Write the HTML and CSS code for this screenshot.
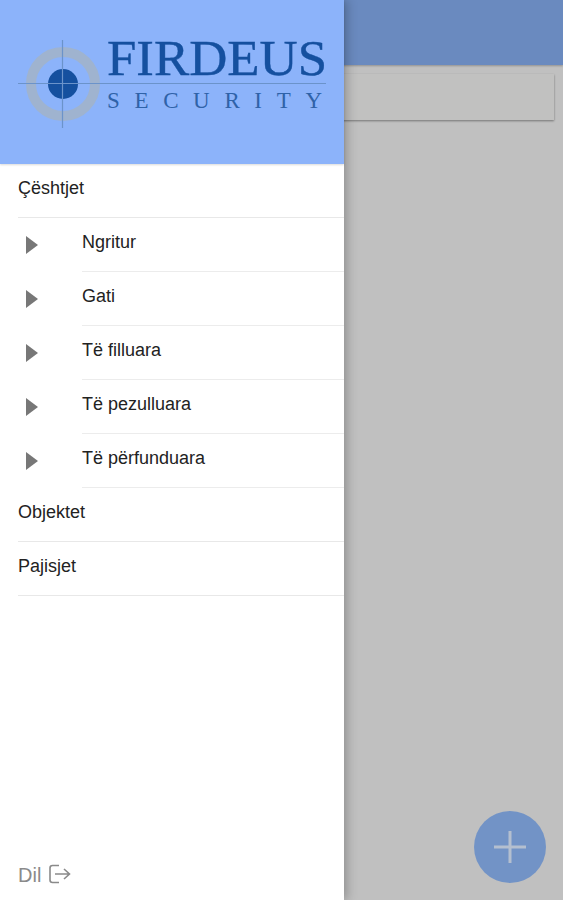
FILE: index.html
```html
<!DOCTYPE html>
<html lang="en">
<head>
    <meta charset="UTF-8">
    <meta name="viewport" content="width=device-width, initial-scale=1.0">
    <title>Firdeus Security</title>
    <link rel="stylesheet" href="styles.css">
</head>
<body>

    <!-- Page behind the drawer -->
    <div class="page">
        <div class="app-bar"></div>
        <div class="search-card"></div>
        <div class="fab">
            <svg width="34" height="34" viewBox="0 0 34 34">
                <path d="M17 1V33M1 17H33" stroke="#b4bfcf" stroke-width="3" fill="none"/>
            </svg>
        </div>
    </div>

    <!-- Side drawer -->
    <nav class="drawer">
        <div class="drawer-header">
            <svg class="logo" width="344" height="164" viewBox="0 0 344 164">
                <circle cx="63" cy="84" r="32" fill="none" stroke="#9fb3cf" stroke-width="10"/>
                <circle cx="63" cy="84" r="15" fill="#15509f"/>
                <path d="M18 83.5H326M62.5 40V128" stroke="#6b93ca" stroke-width="1.2" fill="none"/>
                <text class="logo-name" x="107" y="75" textLength="220" lengthAdjust="spacingAndGlyphs">FIRDEUS</text>
                <text class="logo-sub" x="107" y="108" textLength="215">SECURITY</text>
            </svg>
        </div>

        <div class="menu">
            <div class="menu-item">Çështjet</div>

            <div class="sub-item">
                <span class="arrow"></span>
                <div class="sub-label">Ngritur</div>
            </div>
            <div class="sub-item">
                <span class="arrow"></span>
                <div class="sub-label">Gati</div>
            </div>
            <div class="sub-item">
                <span class="arrow"></span>
                <div class="sub-label">Të filluara</div>
            </div>
            <div class="sub-item">
                <span class="arrow"></span>
                <div class="sub-label">Të pezulluara</div>
            </div>
            <div class="sub-item">
                <span class="arrow"></span>
                <div class="sub-label">Të përfunduara</div>
            </div>

            <div class="menu-item">Objektet</div>
            <div class="menu-item">Pajisjet</div>
        </div>

        <div class="logout">
            <span>Dil</span>
            <svg class="logout-icon" width="24" height="22" viewBox="0 0 24 22">
                <path d="M11 1.500H4.500Q2 1.500 2 4V16Q2 18.500 4.500 18.500H11" stroke="#8a8a8a" stroke-width="1.600" fill="none"/>
                <path d="M7 10H21M16 5L21.500 10L16 15" stroke="#8a8a8a" stroke-width="1.600" fill="none"/>
            </svg>
        </div>
    </nav>

</body>
</html>
```

FILE: styles.css
```css
html, body {
    height: 100%;
}
body {
    margin: 0;
    height: 900px;
    overflow: hidden;
    position: relative;
    background: #c0c0c0;
    font-family: "Liberation Sans", Arial, sans-serif;
}
.page {
    height: 900px;
    display: flex;
    flex-direction: column;
}
.app-bar {
    height: 65px;
    flex-shrink: 0;
    background: #6a8abf;
    box-shadow: 0 1px 2px rgba(0, 0, 0, 0.25);
}
.search-card {
    height: 46px;
    margin: 9px 9px 0 9px;
    background: #c1c1c0;
    box-shadow: 0 1px 2px rgba(0, 0, 0, 0.4);
}
.fab {
    position: absolute;
    left: 474px;
    top: 811px;
    width: 72px;
    height: 72px;
    border-radius: 50%;
    background: #7293c6;
    display: flex;
    align-items: center;
    justify-content: center;
}
.drawer {
    position: absolute;
    left: 0;
    top: 0;
    width: 344px;
    height: 900px;
    background: #fff;
    display: flex;
    flex-direction: column;
    box-shadow: 3px 0 10px rgba(0, 0, 0, 0.25);
}
.drawer-header {
    height: 164px;
    flex-shrink: 0;
    background: #8cb3fa;
    box-shadow: 0 1px 2px rgba(0, 0, 0, 0.15);
}
.logo {
    display: block;
}
.logo-name {
    font-family: "Liberation Serif", "Times New Roman", serif;
    font-size: 50px;
    fill: #15509f;
    stroke: #15509f;
    stroke-width: 0.4px;
}
.logo-sub {
    font-family: "Liberation Serif", "Times New Roman", serif;
    font-size: 23px;
    fill: #2f62a8;
}
.menu {
    flex: 1;
    font-size: 18px;
    color: #222;
}
.menu-item {
    height: 53px;
    line-height: 48px;
    margin-left: 18px;
    border-bottom: 1px solid #e8e8e8;
}
.sub-item {
    height: 54px;
    display: flex;
}
.arrow {
    width: 0;
    height: 0;
    margin: 18px 0 0 26px;
    border-left: 12px solid #777;
    border-top: 9px solid transparent;
    border-bottom: 9px solid transparent;
}
.sub-label {
    flex: 1;
    margin-left: 44px;
    height: 53px;
    line-height: 49px;
    border-bottom: 1px solid #ececec;
}
.logout {
    height: 50px;
    padding-left: 18px;
    display: flex;
    align-items: center;
    gap: 7px;
    font-size: 20px;
    color: #8a8a8a;
}
```
